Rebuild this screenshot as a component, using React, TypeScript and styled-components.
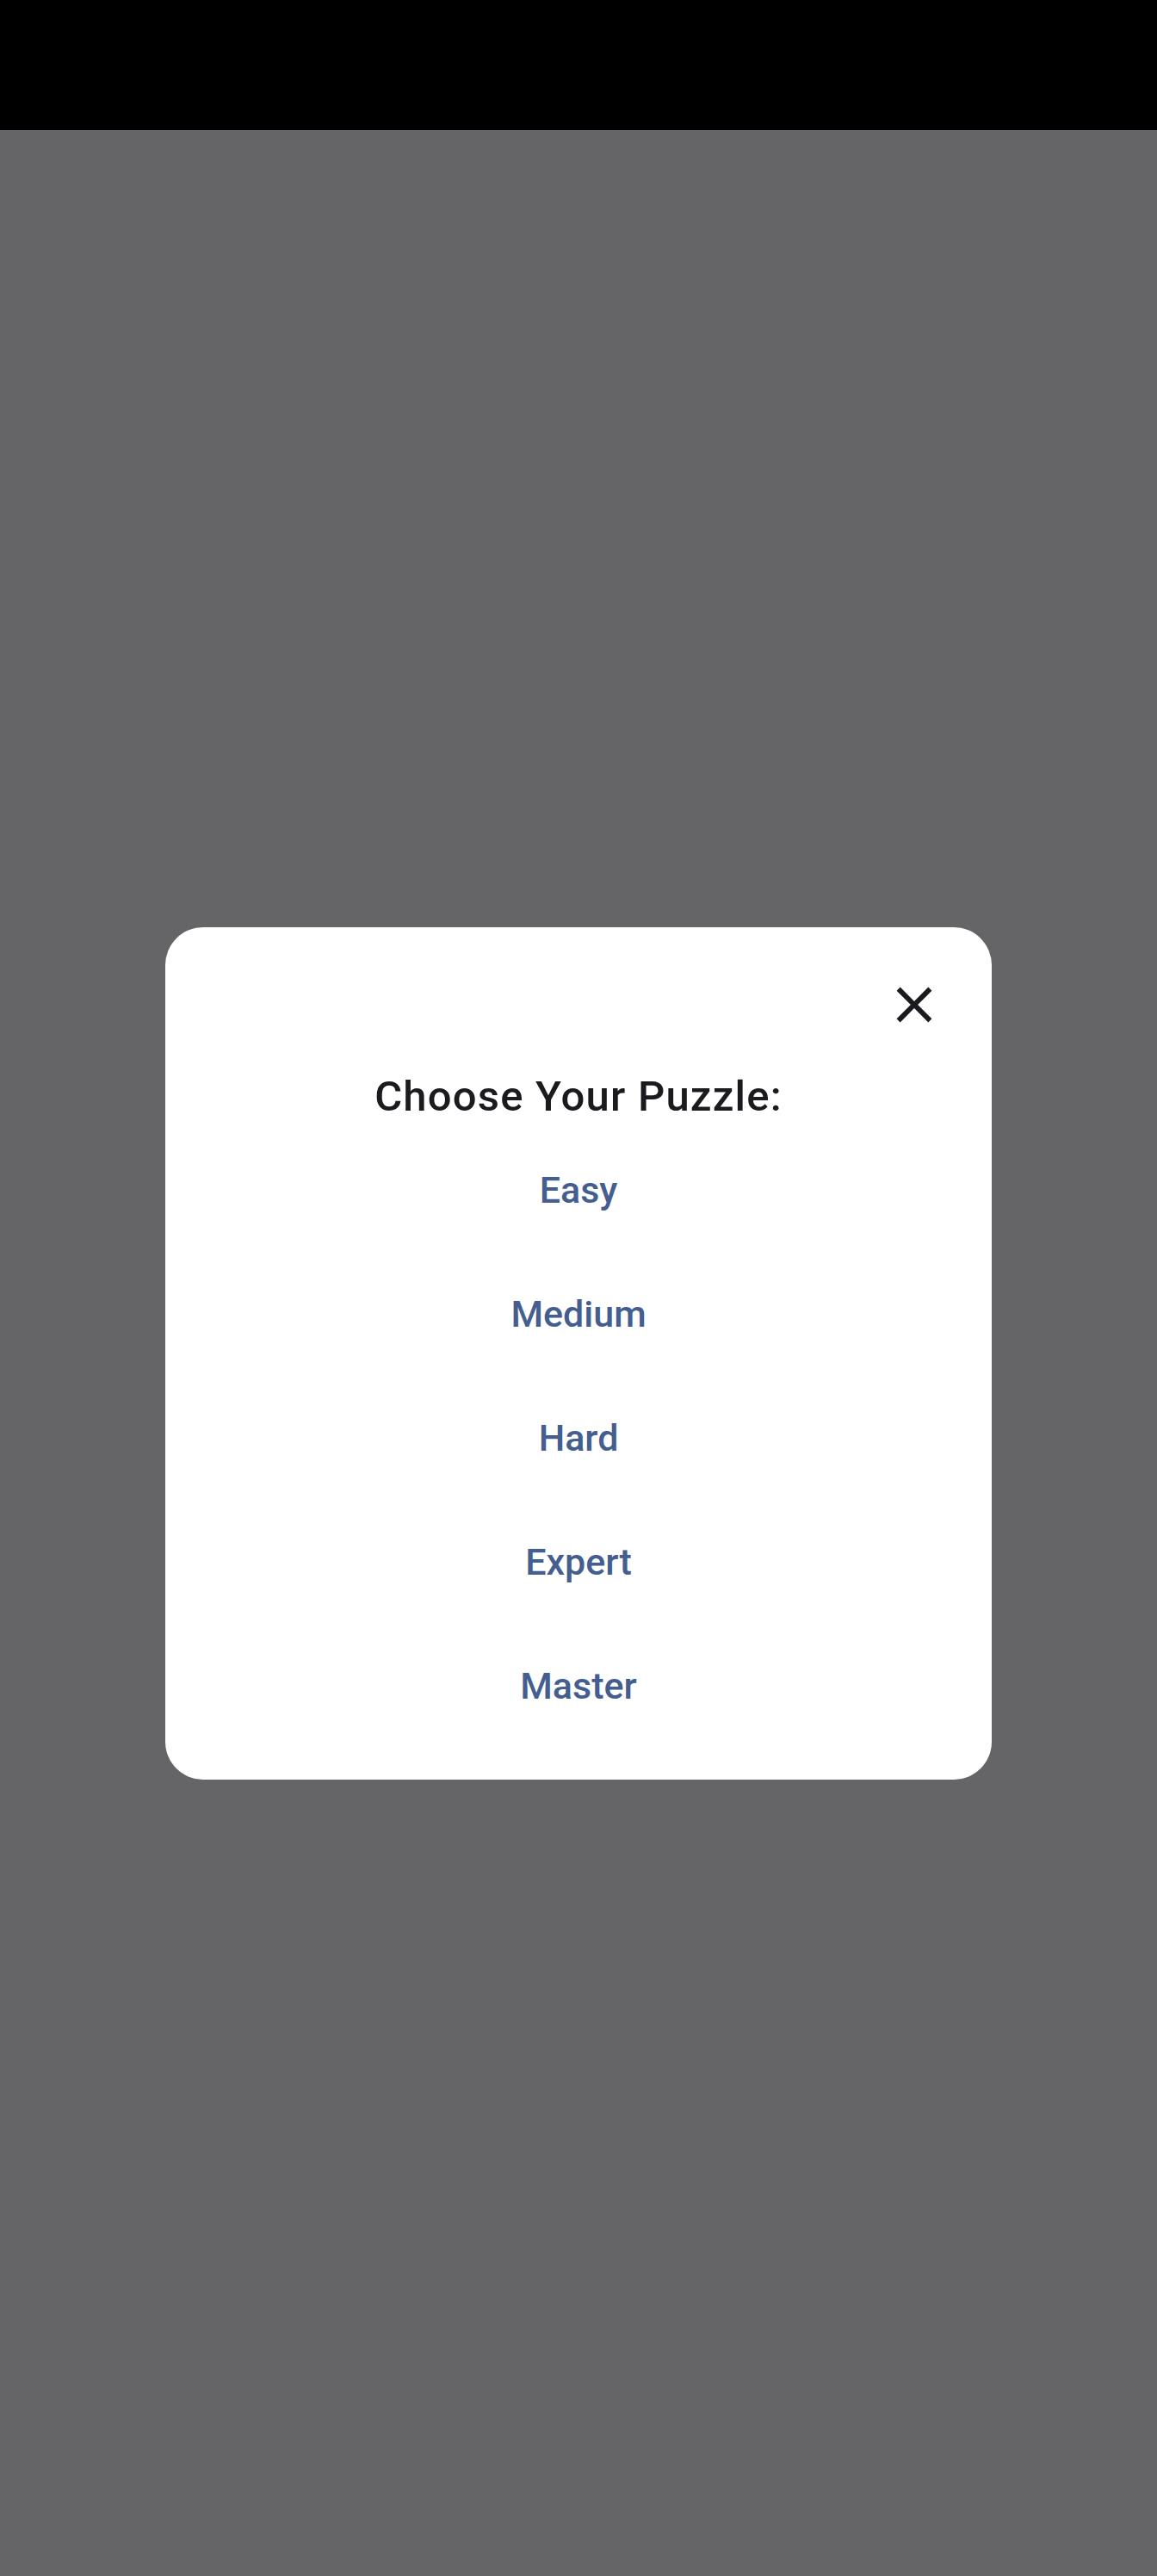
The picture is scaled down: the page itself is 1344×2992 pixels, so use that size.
import React from "react";
import styled, { createGlobalStyle } from "styled-components";

const GlobalStyle = createGlobalStyle`
  html, body {
    margin: 0;
    padding: 0;
    height: 100%;
  }
  body {
    font-family: Roboto, "Noto Sans", sans-serif;
    background: #656567;
  }
  #root {
    height: 100%;
  }
`;

const Screen = styled.div`
  display: flex;
  flex-direction: column;
  width: 1344px;
  height: 2992px;
`;

const StatusBar = styled.div`
  height: 151px;
  flex-shrink: 0;
  background: #000;
`;

const Scrim = styled.div`
  flex: 1;
  display: flex;
  align-items: center;
  justify-content: center;
  background: #656567;
`;

const Dialog = styled.div`
  width: 960px;
  box-sizing: border-box;
  padding: 48px 48px 36px;
  background: #fff;
  border-radius: 44px;
  display: flex;
  flex-direction: column;
`;

const Header = styled.div`
  display: flex;
  justify-content: flex-end;
  height: 84px;
`;

const CloseButton = styled.button`
  width: 84px;
  height: 84px;
  padding: 0;
  border: 0;
  background: transparent;
  display: flex;
  align-items: center;
  justify-content: center;
  color: #1b1b1f;
  cursor: pointer;
`;

const Title = styled.h2`
  margin: 33px 0 5px;
  height: 64px;
  line-height: 64px;
  text-align: center;
  font-size: 49px;
  font-weight: 500;
  color: #1b1b1f;
  letter-spacing: 1.2px;
`;

const Options = styled.div`
  display: flex;
  flex-direction: column;
`;

const Option = styled.button`
  height: 144px;
  border: 0;
  background: transparent;
  display: flex;
  align-items: center;
  justify-content: center;
  font-family: Roboto, "Noto Sans", sans-serif;
  font-size: 43px;
  font-weight: 500;
  line-height: 1;
  color: #445e8f;
  letter-spacing: 0;
  cursor: pointer;
`;

const levels = ["Easy", "Medium", "Hard", "Expert", "Master"];

const CloseIcon = () => (
  <svg width="70" height="70" viewBox="0 0 24 24" fill="currentColor">
    <path d="M19 6.41L17.59 5 12 10.59 6.41 5 5 6.41 10.59 12 5 17.59 6.41 19 12 13.41 17.59 19 19 17.59 13.41 12z" />
  </svg>
);

export default function App() {
  return (
    <>
      <GlobalStyle />
      <Screen>
        <StatusBar />
        <Scrim>
          <Dialog>
            <Header>
              <CloseButton aria-label="Close">
                <CloseIcon />
              </CloseButton>
            </Header>
            <Title>Choose Your Puzzle:</Title>
            <Options>
              {levels.map((level) => (
                <Option key={level}>{level}</Option>
              ))}
            </Options>
          </Dialog>
        </Scrim>
      </Screen>
    </>
  );
}
